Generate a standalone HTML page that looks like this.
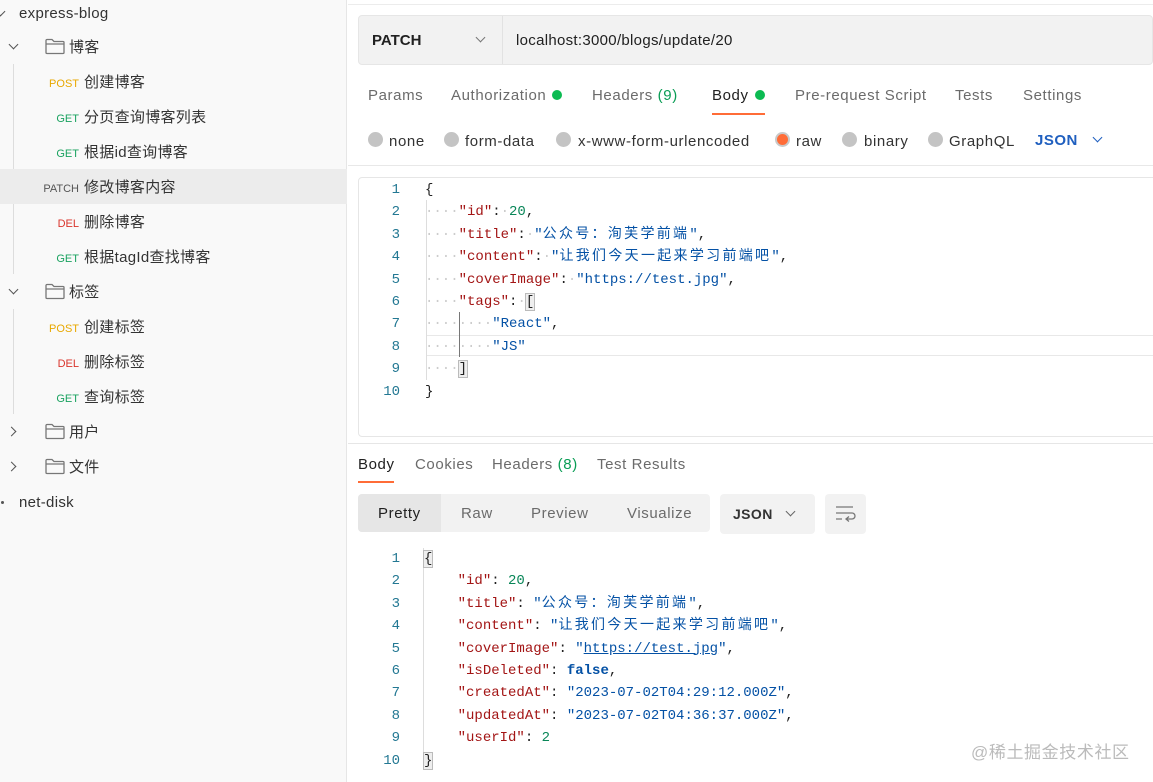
<!DOCTYPE html>
<html><head><meta charset="utf-8"><style>
*{margin:0;padding:0;box-sizing:border-box}
body{width:1153px;height:782px;overflow:hidden;background:#fff;font-family:"Liberation Sans","Noto Sans CJK SC",sans-serif;color:#212121;position:relative;font-size:15px}
.a{position:absolute;white-space:nowrap}
#side{position:absolute;left:0;top:0;width:347px;height:782px;background:#f9f9f9;border-right:1px solid #e6e6e6}
.row{position:absolute;left:0;width:347px;height:35px;line-height:37px;font-size:15px;color:#333;letter-spacing:.3px}
.m{display:inline-block;font-size:11px;text-align:right;margin-right:5px;letter-spacing:0}
.post{color:#e8a800}.get{color:#1aa260}.del{color:#d9342b}.patch{color:#555}
.fold{position:absolute}
.chev{position:absolute;width:7px;height:7px;border-right:1.5px solid #555;border-bottom:1.5px solid #555}
.code{font-family:"Liberation Mono","Noto Sans CJK SC",monospace;font-size:14px;line-height:22.4px}
.c{letter-spacing:2.3px}
.ln{position:absolute;width:42px;text-align:right;color:#237893;}
.k{color:#a31515}.s{color:#0451a5}.n{color:#098658}.b{color:#0451a5;font-weight:bold}
.dot{color:#ccc}
.tab{position:absolute;font-size:15px;color:#6b6b6b;letter-spacing:.6px;margin-top:1px}
.radio{position:absolute;width:15px;height:15px;border-radius:50%;background:#c4c4c4}
</style></head><body>
<div id="side">
 <div class="chev" style="left:-3px;top:8px;transform:rotate(45deg)"></div>
 <div class="row" style="top:-5px;padding-left:19px">express-blog</div>
 <div class="chev" style="left:10px;top:41px;transform:rotate(45deg)"></div>
 <svg class="fold" style="left:45px;top:38px" width="20" height="17" viewBox="0 0 20 17"><path d="M1 2.5a1 1 0 0 1 1-1h5l2 2h9a1 1 0 0 1 1 1v10a1 1 0 0 1-1 1H2a1 1 0 0 1-1-1zM1 6h18" stroke="#777" stroke-width="1.3" fill="none"/></svg>
 <div class="row" style="top:29px;padding-left:69px">博客</div>
 <div class="a" style="left:13px;top:64px;width:1px;height:210px;background:#ddd"></div>
 <div class="row" style="top:64px;padding-left:48px"><span class="m post" style="width:31px">POST</span>创建博客</div>
 <div class="row" style="top:99px;padding-left:48px"><span class="m get" style="width:31px">GET</span>分页查询博客列表</div>
 <div class="row" style="top:134px;padding-left:48px"><span class="m get" style="width:31px">GET</span>根据id查询博客</div>
 <div class="row" style="top:169px;padding-left:38px;background:#ececec"><span class="m patch" style="width:41px">PATCH</span>修改博客内容</div>
 <div class="row" style="top:204px;padding-left:48px"><span class="m del" style="width:31px">DEL</span>删除博客</div>
 <div class="row" style="top:239px;padding-left:48px"><span class="m get" style="width:31px">GET</span>根据tagId查找博客</div>
 <div class="chev" style="left:10px;top:286px;transform:rotate(45deg)"></div>
 <svg class="fold" style="left:45px;top:283px" width="20" height="17" viewBox="0 0 20 17"><path d="M1 2.5a1 1 0 0 1 1-1h5l2 2h9a1 1 0 0 1 1 1v10a1 1 0 0 1-1 1H2a1 1 0 0 1-1-1zM1 6h18" stroke="#777" stroke-width="1.3" fill="none"/></svg>
 <div class="row" style="top:274px;padding-left:69px">标签</div>
 <div class="a" style="left:13px;top:309px;width:1px;height:105px;background:#ddd"></div>
 <div class="row" style="top:309px;padding-left:48px"><span class="m post" style="width:31px">POST</span>创建标签</div>
 <div class="row" style="top:344px;padding-left:48px"><span class="m del" style="width:31px">DEL</span>删除标签</div>
 <div class="row" style="top:379px;padding-left:48px"><span class="m get" style="width:31px">GET</span>查询标签</div>
 <div class="chev" style="left:8px;top:428px;transform:rotate(-45deg)"></div>
 <svg class="fold" style="left:45px;top:423px" width="20" height="17" viewBox="0 0 20 17"><path d="M1 2.5a1 1 0 0 1 1-1h5l2 2h9a1 1 0 0 1 1 1v10a1 1 0 0 1-1 1H2a1 1 0 0 1-1-1zM1 6h18" stroke="#777" stroke-width="1.3" fill="none"/></svg>
 <div class="row" style="top:414px;padding-left:69px">用户</div>
 <div class="chev" style="left:8px;top:463px;transform:rotate(-45deg)"></div>
 <svg class="fold" style="left:45px;top:458px" width="20" height="17" viewBox="0 0 20 17"><path d="M1 2.5a1 1 0 0 1 1-1h5l2 2h9a1 1 0 0 1 1 1v10a1 1 0 0 1-1 1H2a1 1 0 0 1-1-1zM1 6h18" stroke="#777" stroke-width="1.3" fill="none"/></svg>
 <div class="row" style="top:449px;padding-left:69px">文件</div>
 <div class="a" style="left:1px;top:501px;width:3px;height:3px;background:#555;border-radius:50%"></div>
 <div class="row" style="top:484px;padding-left:19px">net-disk</div>
</div>

<div class="a" style="left:348px;top:4px;width:805px;height:1px;background:#ececec"></div>
<div class="a" style="left:358px;top:15px;width:795px;height:50px;background:#f2f2f2;border:1px solid #e6e6e6;border-radius:4px"></div>
<div class="a" style="left:502px;top:16px;width:1px;height:48px;background:#e2e2e2"></div>
<div class="a" style="left:372px;top:32px;font-weight:bold;font-size:15px;color:#212121">PATCH</div>
<div class="chev" style="left:477px;top:34px;transform:rotate(45deg);border-color:#777"></div>
<div class="a" style="left:516px;top:32px;font-size:15px;color:#212121;letter-spacing:.3px">localhost:3000/blogs/update/20</div>

<div class="tab" style="left:368px;top:86px">Params</div>
<div class="tab" style="left:451px;top:86px">Authorization</div>
<div class="a" style="left:552px;top:90px;width:10px;height:10px;border-radius:50%;background:#0cbb52"></div>
<div class="tab" style="left:592px;top:86px">Headers <span style="color:#0a9d55">(9)</span></div>
<div class="tab" style="left:712px;top:86px;color:#212121">Body</div>
<div class="a" style="left:755px;top:90px;width:10px;height:10px;border-radius:50%;background:#0cbb52"></div>
<div class="a" style="left:712px;top:113px;width:53px;height:2px;background:#ff6c37"></div>
<div class="tab" style="left:795px;top:86px">Pre-request Script</div>
<div class="tab" style="left:955px;top:86px">Tests</div>
<div class="tab" style="left:1023px;top:86px">Settings</div>

<div class="radio" style="left:368px;top:132px"></div><div class="tab" style="left:389px;top:132px;color:#333">none</div>
<div class="radio" style="left:444px;top:132px"></div><div class="tab" style="left:465px;top:132px;color:#333">form-data</div>
<div class="radio" style="left:556px;top:132px"></div><div class="tab" style="left:578px;top:132px;color:#333">x-www-form-urlencoded</div>
<div class="radio" style="left:775px;top:132px;background:#ff6c37;border:2px solid #c9c9c9"></div><div class="tab" style="left:796px;top:132px;color:#333">raw</div>
<div class="radio" style="left:842px;top:132px"></div><div class="tab" style="left:864px;top:132px;color:#333">binary</div>
<div class="radio" style="left:928px;top:132px"></div><div class="tab" style="left:949px;top:132px;color:#333">GraphQL</div>
<div class="a" style="left:1035px;top:132px;font-weight:bold;color:#1f5fbf;font-size:15px;letter-spacing:.5px">JSON</div>
<div class="chev" style="left:1094px;top:134px;transform:rotate(45deg);border-color:#1f5fbf"></div>
<div class="a" style="left:348px;top:165px;width:805px;height:1px;background:#e8e8e8"></div>

<div class="a" style="left:358px;top:177px;width:800px;height:260px;border:1px solid #e6e6e6;border-radius:4px"></div>
<div class="a" style="left:426px;top:335px;width:727px;height:21px;border-top:1px solid #e8e8e8;border-bottom:1px solid #e8e8e8"></div>
<div class="a" style="left:426px;top:200px;width:1px;height:180px;background:#ddd"></div>
<div class="a" style="left:459px;top:312px;width:1px;height:45px;background:#777"></div>
<div class="a code" style="left:358px;top:179px;width:795px">
<div class="ln" style="top:0">1</div><div class="ln" style="top:22.4px">2</div><div class="ln" style="top:44.8px">3</div><div class="ln" style="top:67.2px">4</div><div class="ln" style="top:89.6px">5</div><div class="ln" style="top:112px">6</div><div class="ln" style="top:134.4px">7</div><div class="ln" style="top:156.8px">8</div><div class="ln" style="top:179.2px">9</div><div class="ln" style="top:201.6px">10</div>
<div class="a" style="left:67px;top:0">{<br><span class="dot">····</span><span class="k">"id"</span>:<span class="dot">·</span><span class="n">20</span>,<br><span class="dot">····</span><span class="k">"title"</span>:<span class="dot">·</span><span class="s">"<span class="c">公众号：洵芙学前端</span>"</span>,<br><span class="dot">····</span><span class="k">"content"</span>:<span class="dot">·</span><span class="s">"<span class="c">让我们今天一起来学习前端吧</span>"</span>,<br><span class="dot">····</span><span class="k">"coverImage"</span>:<span class="dot">·</span><span class="s">"https://test.jpg"</span>,<br><span class="dot">····</span><span class="k">"tags"</span>:<span class="dot">·</span><span style="background:#eee;outline:1px solid #bbb">[</span><br><span class="dot">········</span><span class="s">"React"</span>,<br><span class="dot">········</span><span class="s">"JS"</span><br><span class="dot">····</span><span style="background:#eee;outline:1px solid #bbb">]</span><br>}</div>
</div>

<div class="a" style="left:348px;top:443px;width:805px;height:1px;background:#e6e6e6"></div>
<div class="tab" style="left:358px;top:455px;color:#212121">Body</div>
<div class="a" style="left:358px;top:481px;width:36px;height:2px;background:#ff6c37"></div>
<div class="tab" style="left:415px;top:455px">Cookies</div>
<div class="tab" style="left:492px;top:455px">Headers <span style="color:#0a9d55">(8)</span></div>
<div class="tab" style="left:597px;top:455px">Test Results</div>

<div class="a" style="left:358px;top:494px;width:352px;height:38px;background:#f2f2f2;border-radius:4px"></div>
<div class="a" style="left:358px;top:494px;width:83px;height:38px;background:#e6e6e6;border-radius:4px 0 0 4px"></div>
<div class="tab" style="left:378px;top:504px;color:#212121">Pretty</div>
<div class="tab" style="left:461px;top:504px">Raw</div>
<div class="tab" style="left:531px;top:504px">Preview</div>
<div class="tab" style="left:627px;top:504px">Visualize</div>
<div class="a" style="left:720px;top:494px;width:95px;height:40px;background:#f2f2f2;border-radius:4px"></div>
<div class="a" style="left:733px;top:506px;font-weight:bold;font-size:14px;color:#333;letter-spacing:.4px">JSON</div>
<div class="chev" style="left:787px;top:508px;transform:rotate(45deg);border-color:#666"></div>
<div class="a" style="left:825px;top:494px;width:41px;height:40px;background:#f2f2f2;border-radius:4px"></div>
<svg class="a" style="left:834px;top:504px" width="22" height="20" viewBox="0 0 22 20"><path d="M2 3h17M2 9h16a3 3 0 0 1 0 6h-6M15 12.5l-3 2.5 3 2.5M2 15h6" stroke="#777" stroke-width="1.3" fill="none"/></svg>

<div class="a" style="left:423px;top:548px;width:1px;height:222px;background:#ddd"></div>
<div class="a code" style="left:358px;top:548px;width:795px">
<div class="ln" style="top:0">1</div><div class="ln" style="top:22.4px">2</div><div class="ln" style="top:44.8px">3</div><div class="ln" style="top:67.2px">4</div><div class="ln" style="top:89.6px">5</div><div class="ln" style="top:112px">6</div><div class="ln" style="top:134.4px">7</div><div class="ln" style="top:156.8px">8</div><div class="ln" style="top:179.2px">9</div><div class="ln" style="top:201.6px">10</div>
<div class="a" style="left:66px;top:0"><span style="background:#eee;outline:1px solid #bbb">{</span><br>&nbsp;&nbsp;&nbsp;&nbsp;<span class="k">"id"</span>: <span class="n">20</span>,<br>&nbsp;&nbsp;&nbsp;&nbsp;<span class="k">"title"</span>: <span class="s">"<span class="c">公众号：洵芙学前端</span>"</span>,<br>&nbsp;&nbsp;&nbsp;&nbsp;<span class="k">"content"</span>: <span class="s">"<span class="c">让我们今天一起来学习前端吧</span>"</span>,<br>&nbsp;&nbsp;&nbsp;&nbsp;<span class="k">"coverImage"</span>: <span class="s">"<u>https://test.jpg</u>"</span>,<br>&nbsp;&nbsp;&nbsp;&nbsp;<span class="k">"isDeleted"</span>: <span class="b">false</span>,<br>&nbsp;&nbsp;&nbsp;&nbsp;<span class="k">"createdAt"</span>: <span class="s">"2023-07-02T04:29:12.000Z"</span>,<br>&nbsp;&nbsp;&nbsp;&nbsp;<span class="k">"updatedAt"</span>: <span class="s">"2023-07-02T04:36:37.000Z"</span>,<br>&nbsp;&nbsp;&nbsp;&nbsp;<span class="k">"userId"</span>: <span class="n">2</span><br><span style="background:#eee;outline:1px solid #bbb">}</span></div>
</div>
<div class="a" style="left:971px;top:738px;font-size:17px;color:#bbb;letter-spacing:.6px">@稀土掘金技术社区</div>
</body></html>
